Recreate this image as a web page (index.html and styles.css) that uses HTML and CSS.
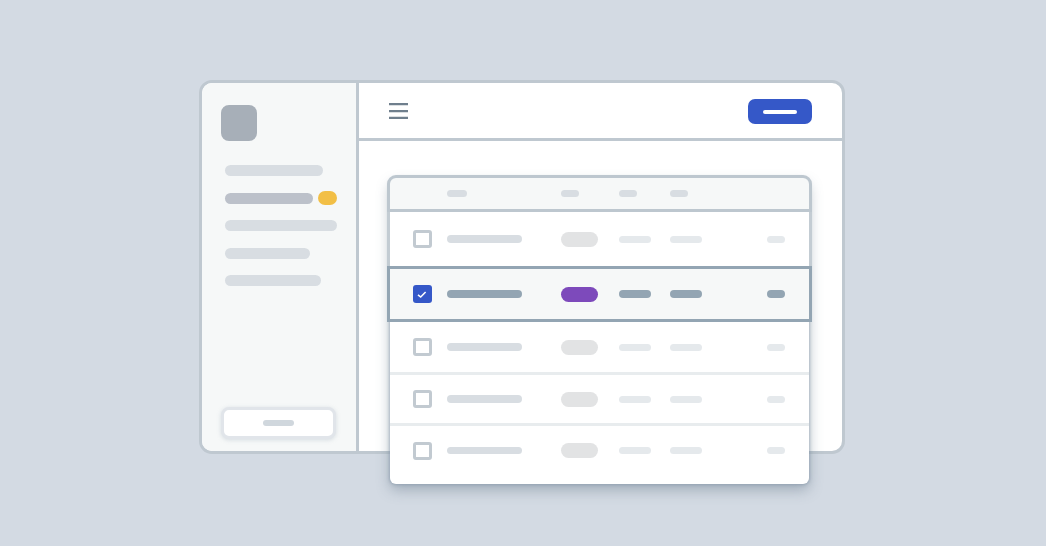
FILE: index.html
```html
<!DOCTYPE html>
<html lang="en">
<head>
<meta charset="utf-8">
<title>Table selection illustration</title>
<link rel="stylesheet" href="styles.css">
</head>
<body>
<div class="window">
  <aside class="sidebar">
    <div class="logo"></div>
    <nav class="nav">
      <div class="nav-item"><span class="bar w98"></span></div>
      <div class="nav-item"><span class="bar w88 dark"></span><span class="dot"></span></div>
      <div class="nav-item"><span class="bar w112"></span></div>
      <div class="nav-item"><span class="bar w85"></span></div>
      <div class="nav-item"><span class="bar w96"></span></div>
    </nav>
    <div class="side-button"><span class="side-button-bar"></span></div>
  </aside>
  <main class="main">
    <header class="topbar">
      <svg class="menu" viewBox="0 0 19 17" width="19" height="17"><path d="M0 1.2H19M0 8.1H19M0 14.9H19" fill="none" stroke="#6f7f8d" stroke-width="2.3"/></svg>
      <div class="primary"><span></span></div>
    </header>
  </main>
</div>
<div class="table">
  <div class="row head">
    <span></span><span class="cell c20"></span><span class="cell c18"></span><span class="cell c18"></span><span class="cell c18"></span><span></span>
  </div>
  <div class="row r1">
    <span class="check"></span><span class="cell c75"></span><span class="pill"></span><span class="cell c32 light"></span><span class="cell c32 light"></span><span class="cell c18 light"></span>
  </div>
  <div class="row r2 selected">
    <span class="check on"><svg viewBox="0 0 18 18" width="18" height="18"><path d="M5 9.8 7.7 12 12.6 7" fill="none" stroke="#fff" stroke-width="1.6"/></svg></span><span class="cell c75"></span><span class="pill"></span><span class="cell c32"></span><span class="cell c32"></span><span class="cell c18"></span>
  </div>
  <div class="row r3">
    <span class="check"></span><span class="cell c75"></span><span class="pill"></span><span class="cell c32 light"></span><span class="cell c32 light"></span><span class="cell c18 light"></span>
  </div>
  <div class="row r4">
    <span class="check"></span><span class="cell c75"></span><span class="pill"></span><span class="cell c32 light"></span><span class="cell c32 light"></span><span class="cell c18 light"></span>
  </div>
  <div class="row r5">
    <span class="check"></span><span class="cell c75"></span><span class="pill"></span><span class="cell c32 light"></span><span class="cell c32 light"></span><span class="cell c18 light"></span>
  </div>
</div>
</body>
</html>
```
FILE: styles.css
```css
* { box-sizing: border-box; }
html, body { margin: 0; height: 100%; }
body {
  background: #d3dae3;
  position: relative;
  width: 1046px;
  height: 546px;
  overflow: hidden;
  padding: 80px 0 0 199px;
}
.window {
  width: 646px;
  height: 374px;
  display: flex;
  background: #fff;
  border: 3px solid #bfc8d0;
  border-radius: 13px;
  overflow: hidden;
}
.sidebar {
  width: 157px;
  flex: none;
  background: #f6f8f8;
  border-right: 3px solid #bfc8d0;
  display: flex;
  flex-direction: column;
  padding: 22px 0 12px 19px;
}
.logo { width: 36px; height: 36px; border-radius: 8px; background: #a7afb8; }
.nav { margin: 24px 0 0 4px; display: flex; flex-direction: column; gap: 16.5px; }
.nav-item { display: flex; align-items: center; gap: 5px; height: 11px; }
.bar { display: block; height: 11px; border-radius: 6px; background: #d8dde2; }
.bar.dark { background: #bcc1ca; }
.w98 { width: 98px; } .w88 { width: 88px; } .w112 { width: 112px; } .w85 { width: 85px; } .w96 { width: 96px; }
.dot { width: 19px; height: 14px; border-radius: 7px; background: #f2bf46; }
.side-button {
  margin-top: auto;
  width: 115px;
  height: 32px;
  background: #fff;
  border: 3px solid #e1e5ea;
  border-radius: 8px;
  box-shadow: 0 1px 4px rgba(150, 165, 180, .35);
  display: flex;
  align-items: center;
  justify-content: center;
}
.side-button-bar { width: 31px; height: 6px; border-radius: 3px; background: #d0d7dd; }
.main { flex: 1; min-width: 0; }
.topbar {
  height: 58px;
  border-bottom: 3px solid #bfc8d0;
  display: flex;
  align-items: center;
  justify-content: space-between;
  padding: 2px 30px 0 30px;
}
.menu { display: block; flex: none; margin-bottom: 1px; }
.primary {
  width: 64px;
  height: 25px;
  background: #3558c8;
  border-radius: 7px;
  display: flex;
  align-items: center;
  justify-content: center;
}
.primary span { width: 34px; height: 4px; border-radius: 2px; background: #fff; }
.table {
  position: absolute;
  left: 390px;
  top: 178px;
  width: 419px;
  height: 306px;
  background: #fff;
  border-radius: 6px;
  box-shadow: 0 0 3px 1px rgba(130, 148, 165, .55), 0 6px 14px rgba(100, 118, 136, .45);
  display: flex;
  flex-direction: column;
}
.row {
  display: grid;
  grid-template-columns: 34px 114px 58px 51px 97px 18px;
  align-items: center;
  padding-left: 23px;
  flex: none;
}
.head {
  height: 37px;
  margin: -3px -3px 0;
  background: #f6f8f8;
  border: 3px solid #bdc7cf;
  border-radius: 9px 9px 0 0;
}
.r1 {
  height: 54px;
  margin: 0 -3px;
  border: solid #c3ccd3;
  border-width: 0 3px;
}
.r2 { height: 56px; margin: 0 -3px; }
.r3 { height: 50px; }
.r4 { height: 51px; border-top: 3px solid #e8ecee; }
.r5 { height: 61px; border-top: 3px solid #e8ecee; padding-bottom: 9px; }
.cell { display: block; height: 7.5px; border-radius: 4px; background: #d8dde2; }
.cell.light { background: #e5e9ec; height: 7px; }
.c20 { width: 20px; } .c18 { width: 18px; } .c75 { width: 75px; } .c32 { width: 32px; }
.pill { display: block; width: 37px; height: 15px; border-radius: 8px; background: #e2e3e4; }
.check {
  display: block;
  width: 18.5px;
  height: 18px;
  background: #fff;
  border: 3px solid #c2cad1;
  border-radius: 3px;
}
.check.on { background: #3558c8; border: 0; }
.check svg { display: block; }
.selected {
  background: #f6f8f8;
  border: 3px solid #93a5b3;
}
.selected .cell { background: #93a5b3; }
.selected .pill { background: #7d4abb; }
```
